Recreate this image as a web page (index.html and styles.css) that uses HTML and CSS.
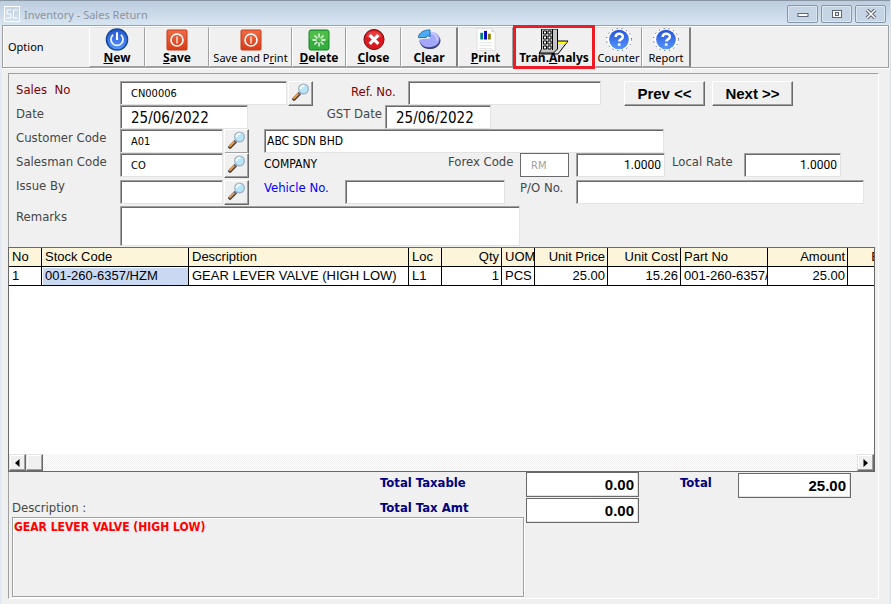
FILE: index.html
```html
<!DOCTYPE html>
<html lang="en">
<head>
    <meta charset="UTF-8">
    <meta name="viewport" content="width=device-width, initial-scale=1.0">
    <title>Inventory - Sales Return</title>
    <link rel="stylesheet" href="styles.css">
</head>
<body>
    <!-- shared icons -->
    <svg class="symbols" aria-hidden="true">
        <defs>
            <linearGradient id="blue" x1="0" y1="0" x2="0" y2="1">
                <stop offset="0" stop-color="#2452d6"/>
                <stop offset="1" stop-color="#5596ff"/>
            </linearGradient>
            <linearGradient id="orange" x1="0" y1="0" x2="0" y2="1">
                <stop offset="0" stop-color="#ee6c48"/>
                <stop offset="1" stop-color="#d63c17"/>
            </linearGradient>
        </defs>
        <symbol id="find" viewBox="0 0 18 18">
            <path d="M7 11L2 16" stroke="#4a4038" stroke-width="3.600" stroke-linecap="round"/>
            <path d="M6 11L2 15" stroke="#e29a55" stroke-width="2.200" stroke-linecap="round"/>
            <path d="M8.500 9.500L6.500 11.500" stroke="#6c6c80" stroke-width="2.500"/>
            <circle cx="11.500" cy="6" r="4.800" fill="#b8e4f7" stroke="#a3b4c6" stroke-width="1.400"/>
            <path d="M8.500 6a3 3 0 0 1 4-3" stroke="#f2fcff" stroke-width="2" fill="none"/>
        </symbol>
        <symbol id="power-red" viewBox="0 0 22 22">
            <rect x="1" y="1" width="20" height="20" rx="1" fill="url(#orange)" stroke="#c93a18"/>
            <circle cx="11" cy="11" r="6" fill="none" stroke="#fff" stroke-width="1.600"/>
            <path d="M11 7.500v7" stroke="#ffc8b8" stroke-width="1.800"/>
        </symbol>
        <symbol id="help" viewBox="0 0 28 24">
            <ellipse cx="14" cy="12" rx="13" ry="11.500" fill="#fff" stroke="#1d2b85" stroke-dasharray="1 4"/>
            <circle cx="14" cy="12" r="10.300" fill="url(#blue)"/>
            <path d="M10.500 9.500c0-4.500 7.500-4.500 7.500-.5 0 3-3.800 2.700-3.800 5.200" fill="none" stroke="#fff" stroke-width="2.600"/>
            <rect x="12.800" y="16" width="2.800" height="2.600" fill="#fff"/>
        </symbol>
    </svg>

    <div class="window">
        <header class="title-bar">
            <span class="logo">
                <svg width="16" height="16" viewBox="0 0 16 16" fill="none" stroke="#fff">
                    <rect x=".5" y=".5" width="15" height="15"/>
                    <path d="M7 4H3v4h4v4H2M13.500 4h-4v8h4"/>
                </svg>
            </span>
            <span class="title">Inventory - Sales Return</span>
            <button class="window-button" aria-label="Minimize">
                <svg width="12" height="10" viewBox="0 0 12 10"><rect x="1" y="4.500" width="10" height="3" fill="#fff" stroke="#5b6470"/></svg>
            </button>
            <button class="window-button" aria-label="Restore">
                <svg width="12" height="10" viewBox="0 0 12 10"><rect x="1.500" y="1.500" width="9" height="7" fill="#fff" stroke="#5b6470"/><rect x="4.500" y="3.500" width="3" height="3" fill="#dce6f0" stroke="#5b6470"/></svg>
            </button>
            <button class="window-button" aria-label="Close window">
                <svg width="12" height="10" viewBox="0 0 12 10"><path d="M2 1l8 8M10 1L2 9" stroke="#5b6470" stroke-width="3.600"/><path d="M2 1l8 8M10 1L2 9" stroke="#fff" stroke-width="1.600"/></svg>
            </button>
        </header>

        <nav class="toolbar">
            <span class="toolbar-title">Option</span>
            <button class="tool tool-new">
                <svg width="24" height="24" viewBox="0 0 24 24">
                    <circle cx="12" cy="12" r="11" fill="url(#blue)" stroke="#174b91" stroke-width="1.600"/>
                    <path d="M8 7a6.300 6.300 0 1 0 8 0" fill="none" stroke="#e7f2ff" stroke-width="1.900"/>
                    <path d="M12 4.500v8" stroke="#fff" stroke-width="2.200"/>
                </svg>
                <span><u>N</u>ew</span>
            </button>
            <button class="tool tool-save">
                <svg width="22" height="22"><use href="#power-red"/></svg>
                <span><u>S</u>ave</span>
            </button>
            <button class="tool tool-save-print">
                <svg width="22" height="22"><use href="#power-red"/></svg>
                <span>Save and P<u>r</u>int</span>
            </button>
            <button class="tool tool-delete">
                <svg width="22" height="22" viewBox="0 0 22 22">
                    <rect x="1" y="1" width="20" height="20" rx="2" fill="#35ad3f" stroke="#168126"/>
                    <path d="M1.500 2h19v8q-9 4-19 0z" fill="#62c854" opacity=".6"/>
                    <path d="M11 4.500v4M11 13.500v4M4.500 11h4M13.500 11h4M6.500 6.500l2.800 2.800M12.700 12.700l2.800 2.800M15.500 6.500l-2.800 2.800M9.300 12.700l-2.800 2.800" stroke="#fff" stroke-width="1.300"/>
                </svg>
                <span><u>D</u>elete</span>
            </button>
            <button class="tool tool-close">
                <svg width="24" height="24" viewBox="0 0 24 24">
                    <circle cx="12" cy="12" r="10.500" fill="#d9191e" stroke="#6c0b0e"/>
                    <path d="M4 9a8.500 8.500 0 0 1 16 0q-8 4-16 0" fill="#ee5553" opacity=".6"/>
                    <path d="M7.500 7.500l9 9M16.500 7.500l-9 9" stroke="#fff" stroke-width="3.400"/>
                </svg>
                <span><u>C</u>lose</span>
            </button>
            <button class="tool tool-clear">
                <svg width="24" height="24" viewBox="0 0 24 24">
                    <path d="M14 6c6 0 10 3 10 7 0 5-5 9-11 9S3 19 2 13h11z" fill="#3d427f"/>
                    <path d="M13 4c6 0 10 3 10 7 0 6-5 9-11 9S3 17 2 12l11-1z" fill="#a3a8fa"/>
                    <path d="M1 9c1-4 5-7 12-7v7l-3-1-1 2H1z" fill="#4cabf3" stroke="#176fae"/>
                    <path d="M14 5c5 1 7 4 6 8" fill="none" stroke="#c8cbff" stroke-width="2"/>
                </svg>
                <span>C<u>l</u>ear</span>
            </button>
            <button class="tool tool-print">
                <svg width="22" height="24" viewBox="0 0 22 24">
                    <path d="M1.500 .5h15l4 4v19h-19z" fill="#fff" stroke="#dedede"/>
                    <path d="M16.500 .5v4h4z" fill="#d5d5d5"/>
                    <path d="M5 5h3v7H5z" fill="#008080"/>
                    <path d="M9 3h3v9H9z" fill="#0000c8"/>
                    <path d="M13 6h3v6h-3z" fill="#858000"/>
                    <path d="M4 15.500h13M4 18.500h13M4 21.500h13" stroke="#e3e3e3"/>
                </svg>
                <span><u>P</u>rint</span>
            </button>
            <button class="tool tool-analys">
                <svg width="32" height="26" viewBox="0 0 32 26">
                    <path d="M15 12h15L20 25H1l3-4z" fill="#ddd" stroke="#000"/>
                    <path d="M18 13h11l-2 2h-9z" fill="#ff0"/>
                    <path d="M3.500 0v20l-2 4h14l4-4V0z" fill="#c4c4c4" stroke="#000"/>
                    <path d="M14.500 0v21" stroke="#000"/>
                    <path d="M5.500 2h3v3h-3zM10 2h3v3h-3zM5.500 7h3v3h-3zM10 7h3v3h-3zM5.500 12h3v3h-3zM10 12h3v3h-3zM5.500 17h3v3h-3zM10 17h3v3h-3z" fill="#fff" stroke="#000"/>
                </svg>
                <span>Tran.<u>A</u>nalys</span>
            </button>
            <button class="tool tool-counter">
                <svg width="28" height="24"><use href="#help"/></svg>
                <span>Counter</span>
            </button>
            <button class="tool tool-report">
                <svg width="28" height="24"><use href="#help"/></svg>
                <span>Report</span>
            </button>
        </nav>

        <main class="panel">
            <form class="details">
                <div class="row row-number">
                    <label class="required" for="sales-no">Sales&nbsp; No</label>
                    <input id="sales-no" value="CN00006">
                    <button class="find" type="button" aria-label="Find sales number"><svg width="18" height="18"><use href="#find"/></svg></button>
                    <label class="required label-low" for="ref-no">Ref. No.</label>
                    <input id="ref-no">
                    <button class="step" type="button">Prev &lt;&lt;</button>
                    <button class="step" type="button">Next &gt;&gt;</button>
                </div>
                <div class="row row-date">
                    <label for="date">Date</label>
                    <input class="date" id="date" value="25/06/2022">
                    <label class="label-right" for="gst-date">GST Date</label>
                    <input class="date" id="gst-date" value="25/06/2022">
                </div>
                <div class="row row-customer">
                    <label for="customer">Customer Code</label>
                    <input id="customer" value="A01">
                    <button class="find" type="button" aria-label="Find customer"><svg width="18" height="18"><use href="#find"/></svg></button>
                    <input class="customer-name" aria-label="Customer name" value="ABC SDN BHD">
                </div>
                <div class="row row-salesman">
                    <label for="salesman">Salesman Code</label>
                    <input id="salesman" value="CO">
                    <button class="find" type="button" aria-label="Find salesman"><svg width="18" height="18"><use href="#find"/></svg></button>
                    <span class="salesman-name">COMPANY</span>
                    <label for="forex">Forex Code</label>
                    <input class="raised" id="forex" value="RM" disabled>
                    <input class="rate" aria-label="Forex rate" value="1.0000">
                    <label for="local-rate">Local Rate</label>
                    <input class="rate" id="local-rate" value="1.0000">
                </div>
                <div class="row row-issue">
                    <label for="issue-by">Issue By</label>
                    <input id="issue-by">
                    <button class="find" type="button" aria-label="Find issuer"><svg width="18" height="18"><use href="#find"/></svg></button>
                    <label class="vehicle" for="vehicle">Vehicle No.</label>
                    <input id="vehicle">
                    <label for="po-no">P/O No.</label>
                    <input id="po-no">
                </div>
                <div class="row row-remarks">
                    <label class="label-low" for="remarks">Remarks</label>
                    <textarea id="remarks"></textarea>
                </div>
            </form>

            <section class="grid">
                <div class="grid-rows">
                    <table>
                        <colgroup>
                            <col class="col-no"><col class="col-stock"><col class="col-description"><col class="col-loc"><col class="col-qty"><col class="col-uom"><col class="col-price"><col class="col-price"><col class="col-part"><col class="col-amount"><col class="col-extra">
                        </colgroup>
                        <thead>
                            <tr>
                                <th>No</th>
                                <th>Stock Code</th>
                                <th>Description</th>
                                <th>Loc</th>
                                <th class="number">Qty</th>
                                <th>UOM</th>
                                <th class="number">Unit Price</th>
                                <th class="number">Unit Cost</th>
                                <th>Part No</th>
                                <th class="number">Amount</th>
                                <th class="number">E</th>
                            </tr>
                        </thead>
                        <tbody>
                            <tr>
                                <td>1</td>
                                <td class="selected">001-260-6357/HZM</td>
                                <td>GEAR LEVER VALVE (HIGH LOW)</td>
                                <td>L1</td>
                                <td class="number">1</td>
                                <td>PCS</td>
                                <td class="number">25.00</td>
                                <td class="number">15.26</td>
                                <td>001-260-6357/</td>
                                <td class="number">25.00</td>
                                <td></td>
                            </tr>
                        </tbody>
                    </table>
                </div>
                <div class="scrollbar">
                    <button aria-label="Scroll left"><svg width="5" height="8" viewBox="0 0 5 8"><path d="M4.500 0v8L0 4z"/></svg></button>
                    <span class="thumb"></span>
                    <button class="scroll-right" aria-label="Scroll right"><svg width="5" height="8" viewBox="0 0 5 8"><path d="M.5 0v8L5 4z"/></svg></button>
                </div>
            </section>

            <section class="totals">
                <label class="total-label" for="taxable">Total Taxable</label>
                <input class="total" id="taxable" value="0.00">
                <label class="total-label grand-label" for="total">Total</label>
                <input class="total grand" id="total" value="25.00">
                <span class="description-label">Description :</span>
                <label class="total-label tax-label" for="tax">Total Tax Amt</label>
                <input class="total tax" id="tax" value="0.00">
                <div class="description">GEAR LEVER VALVE (HIGH LOW)</div>
            </section>
        </main>
    </div>
</body>
</html>
```
FILE: styles.css
```css
* {
    box-sizing: border-box;
}
body {
    margin: 0;
    background-color: #f0f0f0;
    color: #000;
    font-family: "DejaVu Sans Condensed", Tahoma, "DejaVu Sans", sans-serif;
    font-size: 13px;
}
button, input, textarea {
    margin: 0;
    padding: 0;
    border-radius: 0;
    color: inherit;
    font: inherit;
}
svg {
    display: block;
}
.symbols {
    position: absolute;
    width: 0;
    height: 0;
}
.window {
    display: flex;
    flex-direction: column;
    min-height: 100vh;
    border-left: 2px solid #e3eaf4;
    border-right: 1px solid #d3e3f1;
}

/* title bar */
.title-bar {
    display: flex;
    align-items: center;
    height: 25px;
    margin-left: -2px;
    padding: 2px 4px 0;
    gap: 3px;
    border-top: 1px solid #8995a3;
    background: linear-gradient(#bccddf, #d8e5f2);
}
.logo {
    margin-right: 1px;
}
.title {
    flex: 1;
    color: #8b939e;
    font-family: "Noto Sans", sans-serif;
    font-size: 11px;
}
.window-button {
    display: flex;
    align-items: center;
    justify-content: center;
    width: 31px;
    height: 18px;
    border: 1px solid #8795a8;
    border-radius: 2px;
    background: #c6d5e6;
    box-shadow: inset 0 0 0 1px #dce7f2;
}

/* toolbar */
.toolbar {
    display: flex;
    height: 43px;
    border: 1px solid #a0a0a0;
    box-shadow: inset 1px 1px #fff, 0 1px #fff;
    padding: 1px 0 0 5px;
    margin-right: 1px;
}
.toolbar-title {
    width: 81px;
    font-family: "Noto Sans", sans-serif;
    font-size: 11px;
    line-height: 40px;
}
.tool {
    display: flex;
    flex-direction: column;
    align-items: center;
    justify-content: flex-end;
    height: 40px;
    padding-bottom: 1px;
    border: 1px solid;
    border-color: #e3e3e3 #a0a0a0 #a0a0a0 #fff;
    background: #f0f0f0;
    font-family: "Noto Sans", sans-serif;
    font-size: 12px;
    font-weight: bold;
    line-height: 14px;
    white-space: nowrap;
}
.tool u {
    text-underline-offset: 1px;
}
.tool-new {
    width: 56px;
}
.tool-save {
    width: 64px;
}
.tool-save-print {
    width: 83px;
}
.tool-delete {
    width: 54px;
}
.tool-close {
    width: 55px;
}
.tool-clear {
    width: 57px;
    border-right: 2px solid #808080;
}
.tool-print {
    width: 55px;
}
.tool-analys {
    width: 82px;
    height: 44px;
    margin-top: -2px;
    border: 3px solid #ed1c24;
    z-index: 1;
}
.tool-counter {
    width: 47px;
}
.tool-report {
    width: 49px;
    border-right: 2px solid #808080;
}
.tool-save-print, .tool-counter, .tool-report {
    font-size: 11px;
    font-weight: normal;
}
.tool-analys svg {
    margin-bottom: -4px;
}

/* main panel */
.panel {
    flex: 1;
    display: flex;
    flex-direction: column;
    margin: 5px 11px 5px 6px;
    border: 1px solid;
    border-color: #a0a0a0 #fff #fff #a0a0a0;
}
.details {
    padding: 7px 0 1px 7px;
}
.row {
    display: grid;
    grid-auto-rows: 24px;
    color: #464646;
}
.row label, .salesman-name {
    line-height: 18px;
    white-space: nowrap;
}
.row input, .row textarea {
    width: 100%;
    min-width: 0;
    height: 24px;
    padding: 0 10px;
    border: 1px solid;
    border-color: #a0a0a0 #e3e3e3 #e3e3e3 #a0a0a0;
    box-shadow: inset 1px 1px #696969;
    background-color: #fff;
    color: #000;
    font-size: 11px;
}
.row input.date {
    padding: 2px 10px 0;
    font-size: 15px;
}
.row input.customer-name {
    padding: 0 2px;
    font-size: 12px;
}
.row input.rate {
    padding: 0 3px;
    font-family: Roboto, sans-serif;
    font-size: 12px;
    text-align: right;
}
.row input.raised {
    border-color: #696969;
    box-shadow: none;
    color: #a0a0a0;
}
.row-number {
    grid-template-columns: 104px 167px 26px 38px 57px 193px 23px 81px 7px 81px;
}
.row-number label:nth-of-type(2) {
    grid-column: 5;
}
.row-number .step {
    grid-column: 8;
}
.row-number .step:last-child {
    grid-column: 10;
}
.row-date {
    grid-template-columns: 104px 128px 137px 106px;
}
.row-customer {
    grid-template-columns: 104px 103px 41px 400px;
}
.row-salesman {
    grid-template-columns: 104px 103px 41px 184px 72px 56px 96px 72px 97px;
}
.row-salesman #forex {
    width: 49px;
}
.row-salesman #forex + .rate {
    width: 89px;
}
.row-issue {
    grid-template-columns: 104px 103px 41px 81px 175px 56px 288px;
}
.row-issue input, .row-issue .find {
    margin-top: 3px;
}
.row-issue #vehicle {
    width: 160px;
}
.row-remarks {
    grid-template-columns: 104px 400px;
    padding-top: 5px;
    grid-auto-rows: 40px;
}
.row-remarks textarea {
    display: block;
    height: 40px;
    resize: none;
}
.row .required {
    color: #800000;
}
.row .vehicle {
    color: #0000ff;
}
.row .label-low, .row .vehicle, .row-issue .vehicle ~ label {
    padding-top: 2px;
}
.row .label-right {
    padding-right: 3px;
    text-align: right;
}
.salesman-name {
    padding-top: 2px;
    color: #000;
    font-size: 12px;
}
.find, .step {
    height: 25px;
    border: 1px solid;
    border-color: #fff #696969 #696969 #fff;
    background: #f0f0f0;
    box-shadow: inset -1px -1px #a0a0a0;
}
.find {
    display: flex;
    justify-content: center;
    justify-self: start;
    width: 25px;
    margin-left: 1px;
    padding-top: 1px;
}
.step {
    color: #000;
    font-family: "Liberation Sans", Arial, sans-serif;
    font-size: 15px;
    font-weight: bold;
}

/* item grid */
.grid {
    margin: 0 3px 0 -1px;
    border: 1px solid #696969;
    background-color: #fff;
}
.grid-rows {
    height: 206px;
    overflow: hidden;
}
table {
    width: 874px;
    table-layout: fixed;
    border-collapse: separate;
    border-spacing: 0;
    font-family: "Liberation Sans", Arial, sans-serif;
    font-size: 13px;
}
th, td {
    height: 19px;
    padding: 0 0 0 3px;
    border-right: 1px solid #000;
    border-bottom: 1px solid #000;
    font-weight: normal;
    line-height: 18px;
    text-align: left;
    white-space: nowrap;
    overflow: hidden;
}
th {
    background-color: #fdf5da;
}
.number {
    padding: 0 2px;
    text-align: right;
}
.selected {
    background-color: #c9d9f2;
    box-shadow: inset 1px 1px #fff;
}
.col-no, .col-loc, .col-uom {
    width: 33px;
}
.col-stock {
    width: 147px;
}
.col-description {
    width: 220px;
}
.col-qty {
    width: 60px;
}
.col-price {
    width: 73px;
}
.col-part {
    width: 87px;
}
.col-amount {
    width: 80px;
}
.col-extra {
    width: 35px;
}
.scrollbar {
    display: flex;
    height: 17px;
    background: repeating-conic-gradient(#f0f0f0 0 25%, #fff 0 50%) 0 0 / 2px 2px;
}
.scrollbar button, .thumb {
    display: flex;
    align-items: center;
    justify-content: center;
    width: 17px;
    height: 17px;
    border: 1px solid;
    border-color: #e3e3e3 #696969 #696969 #e3e3e3;
    background: #f0f0f0;
    box-shadow: inset -1px -1px #a0a0a0, inset 1px 1px #fff;
}
.scrollbar .scroll-right {
    margin-left: auto;
}

/* totals */
.totals {
    display: grid;
    grid-template-columns: 368px 146px 113px 41px 58px 113px;
    grid-template-rows: 26px 19px 80px;
    padding-left: 3px;
}
.total-label {
    grid-column: 2;
    color: #000080;
    font-size: 13px;
    font-weight: bold;
    line-height: 22px;
}
.total {
    width: 100%;
    height: 25px;
    padding: 0 4px;
    border: 1px solid #696969;
    background-color: #fff;
    box-shadow: inset -1px -1px #e3e3e3;
    font-family: "Liberation Sans", Arial, sans-serif;
    font-size: 15px;
    font-weight: bold;
    text-align: right;
}
.grand-label {
    grid-column: 5;
}
.grand {
    margin-top: 1px;
}
.description-label {
    grid-area: 2 / 1;
    color: #464646;
    line-height: 20px;
}
.tax-label {
    grid-area: 2 / 2;
    line-height: 19px;
}
.tax {
    grid-area: 2 / 3 / 4 / 4;
}
.description {
    grid-area: 3 / 1 / 4 / 3;
    margin-right: 2px;
    padding: 0 1px;
    border: 1px solid #a0a0a0;
    box-shadow: inset 1px 1px #fff, 1px 1px #fff;
    color: #ff0000;
    font-size: 12px;
    font-weight: bold;
    line-height: 18px;
}
```
